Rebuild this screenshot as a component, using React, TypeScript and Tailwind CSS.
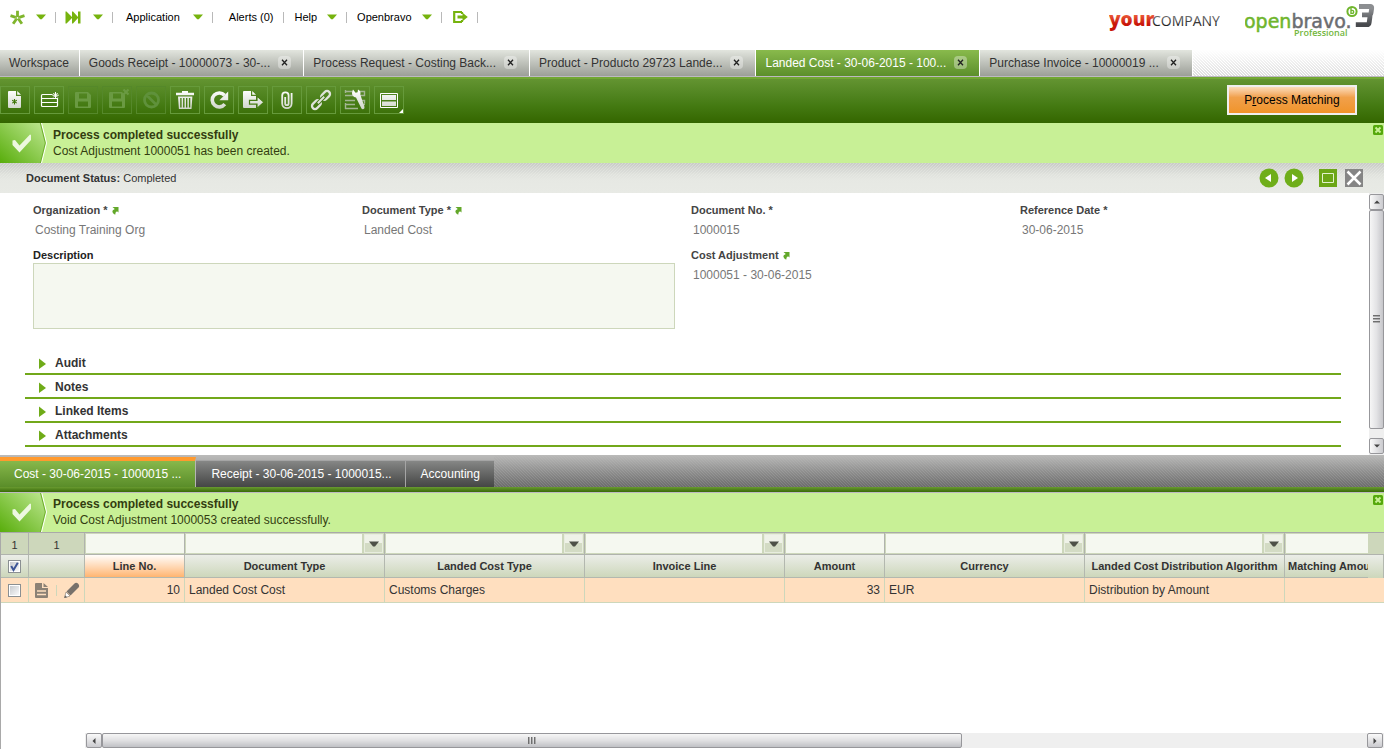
import { useState } from 'react'
import type { ReactNode } from 'react'

const HATCH =
  'bg-[linear-gradient(45deg,rgba(0,0,0,0.13)_17%,transparent_17%,transparent_50%,rgba(0,0,0,0.13)_50%,rgba(0,0,0,0.13)_67%,transparent_67%)] bg-size-[3px_3px]'

function Caret() {
  return (
    <svg width="10" height="6" viewBox="0 0 10 6" className="shrink-0">
      <path d="M0 0.5h10L5.8 5.2H4.2z" fill="#76b30e" />
    </svg>
  )
}

function NavItem({ className, label, children }: { className: string; label?: string; children: ReactNode }) {
  return (
    <div className="flex items-center">
      <button type="button" aria-label={label} className={`flex items-center ${className}`}>
        {children}
      </button>
      <span className="h-[11px] w-px bg-[#b9b9b9]" />
    </div>
  )
}

function TopBar() {
  return (
    <header className="flex h-[50px] items-start justify-between">
      <nav className="flex h-[34px] items-center text-[11px] text-black">
        <NavItem className="gap-[11px] pr-[9px] pl-[10px]" label="Quick create">
          <svg width="15" height="15" viewBox="0 0 15 15">
            <g stroke="#7fb52c" strokeWidth="2.8">
              <path d="M7.5 6V0.8M9.3 7.3l5.2-1.7M8.7 9.2l3.2 4.6M6.3 9.2l-3.2 4.6M5.7 7.3L.5 5.6" />
            </g>
            <circle cx="7.5" cy="7.9" r="2.2" fill="#7fb52c" />
            <circle cx="7.5" cy="7.9" r="0.9" fill="#fff" />
          </svg>
          <Caret />
        </NavItem>
        <NavItem className="gap-3 px-[9px]" label="Quick launch">
          <svg width="16" height="13" viewBox="0 0 16 13">
            <path d="M0.5 0.5h1L7 6V0.5h1L13 6V0.5h2.5v12H13V7l-5 5.5H7V7l-5.5 5.5h-1z" fill="#76b30e" />
          </svg>
          <Caret />
        </NavItem>
        <NavItem className="gap-[13px] pr-[9px] pl-[13px]">
          Application
          <Caret />
        </NavItem>
        <NavItem className="pr-[10px] pl-4">Alerts (0)</NavItem>
        <NavItem className="gap-[10px] pr-[9px] pl-[10px]">
          Help
          <Caret />
        </NavItem>
        <NavItem className="gap-[10px] pr-[9px] pl-[10px]">
          Openbravo
          <Caret />
        </NavItem>
        <NavItem className="pr-[9px] pl-[11px]" label="Log out">
          <svg width="15" height="12" viewBox="0 0 15 12">
            <path d="M9 1H1.2v10H9M9 1v2M9 11V9" fill="none" stroke="#76b30e" strokeWidth="2.2" />
            <path d="M4.5 4.6h5V1.8L14.8 6l-5.3 4.2V7.4h-5z" fill="#76b30e" />
          </svg>
        </NavItem>
      </nav>
      <div className="flex items-start gap-[25px] pr-[9px]">
        <svg width="111" height="34" viewBox="0 0 111 34" role="img" aria-label="yourCOMPANY">
          <defs>
            <linearGradient id="yourRed" x1="0" y1="0" x2="0" y2="1">
              <stop offset="0.3" stopColor="#f0623f" />
              <stop offset="0.7" stopColor="#c8150a" />
            </linearGradient>
            <linearGradient id="companyGrey" x1="0" y1="0" x2="0" y2="1">
              <stop offset="0.2" stopColor="#777" />
              <stop offset="0.8" stopColor="#1c1c1c" />
            </linearGradient>
          </defs>
          <text x="0" y="26" fontFamily="Open Sans" fontSize="19" fontWeight="800" fill="url(#yourRed)">your</text>
          <text x="43" y="26" fontFamily="Open Sans" fontSize="14" fontWeight="400" fill="url(#companyGrey)">COMPANY</text>
        </svg>
        <svg width="130" height="40" viewBox="0 0 130 40" role="img" aria-label="Openbravo 3 Professional">
          <defs>
            <linearGradient id="three" gradientUnits="userSpaceOnUse" x1="0" y1="4" x2="0" y2="27">
              <stop offset="0.2" stopColor="#8c8e91" />
              <stop offset="0.9" stopColor="#47494d" />
            </linearGradient>
          </defs>
          <text x="-1" y="28" fontFamily="DejaVu Sans" fontSize="19" strokeWidth="0.5">
            <tspan fill="#6fb52c" stroke="#6fb52c">open</tspan>
            <tspan fill="#6b6d70" stroke="#6b6d70">bravo.</tspan>
          </text>
          <text x="49" y="36" fontFamily="Open Sans" fontSize="9" fontWeight="600" fill="#72b63c">Professional</text>
          <circle cx="107" cy="11.5" r="4.6" fill="#fff" stroke="#6fb52c" strokeWidth="2" />
          <path d="M106 8v5.4h1.2a1.5 1.5 0 0 0 0-3H106" fill="none" stroke="#6fb52c" strokeWidth="1.4" />
          <path d="M114 6.5h11.2q1.8 0 1.5 1.7l-.7 4.8q-.3 1.8-2 1.8h-7M123.5 14.8q1.8 0 1.5 1.7l-.8 5.8q-.3 2.4-2.4 2.4h-11" fill="none" stroke="url(#three)" strokeWidth="4.8" />
        </svg>
      </div>
    </header>
  )
}

const tabs = [
  { id: 'workspace', title: 'Workspace', closable: false },
  { id: 'receipt', title: 'Goods Receipt - 10000073 - 30-...', closable: true },
  { id: 'request', title: 'Process Request - Costing Back...', closable: true },
  { id: 'product', title: 'Product - Producto 29723 Lande...', closable: true },
  { id: 'cost', title: 'Landed Cost - 30-06-2015 - 100...', closable: true },
  { id: 'invoice', title: 'Purchase Invoice - 10000019 ...', closable: true },
]

function WindowTabs() {
  const [active, setActive] = useState('cost')
  return (
    <div className="flex h-[27px] border-b border-[#bdb9c1]">
      {tabs.map((tab) => (
        <div
          key={tab.id}
          className={`flex items-center border-r border-white pb-px pl-[9px] text-xs whitespace-nowrap ${
            tab.closable ? 'pr-3' : 'pr-[10px]'
          } ${
            tab.id === active
              ? 'bg-linear-to-b from-[#89ba4c] to-[#5c8f2b] text-white'
              : 'bg-linear-to-b from-[#e2e5de] to-[#9c9f98] text-[#333]'
          }`}
        >
          <button type="button" onClick={() => setActive(tab.id)}>
            {tab.title}
          </button>
          {tab.closable && (
            <button
              type="button"
              aria-label="Close tab"
              className="ml-2 flex h-[13px] w-[13px] items-center justify-center rounded-sm bg-white/35 text-[#222]"
            >
              <svg width="7" height="7" viewBox="0 0 7 7">
                <path d="M1 0.8l5 5.4M6 0.8L1 6.2" stroke="currentColor" strokeWidth="1.3" />
              </svg>
            </button>
          )}
        </div>
      ))}
      <div className={`flex-1 ${HATCH} mask-t-from-0%`} />
    </div>
  )
}

const DISK = 'M7 7q0-1 1-1h12l3 3v12q0 1-1 1H8q-1 0-1-1zM11 7.5v5h8v-5zM10 15.5v5h10v-5z'

const tools: { label: string; icon: ReactNode; disabled?: boolean; menu?: boolean }[] = [
  {
    label: 'New in form',
    icon: (
      <>
        <path d="M8 6q0-1 1-1h7v5h5v11q0 1-1 1H9q-1 0-1-1zM17.2 5L21 8.8h-3.8z" fill="url(#tool)" />
        <path d="M14.5 13v5.4M12.2 14.3l4.6 2.8M16.8 14.3l-4.6 2.8" stroke="#3c7505" strokeWidth="1.1" />
      </>
    ),
  },
  {
    label: 'New in grid',
    icon: (
      <>
        <path d="M18.5 8.5h-10q-1 0-1 1v10q0 1 1 1h14q1 0 1-1V12M7.5 12.5h16M7.5 16.5h16" fill="none" stroke="#fff" strokeWidth="1.2" />
        <path d="M21.5 6v6.4M18.4 9.2h6.4M19.3 7l4.4 4.4M23.7 7l-4.4 4.4" stroke="#fff" />
      </>
    ),
  },
  { label: 'Save', disabled: true, icon: <path d={DISK} fill="#6a9a42" fillRule="evenodd" /> },
  {
    label: 'Save and close',
    disabled: true,
    icon: (
      <>
        <path d={DISK} fill="#6a9a42" fillRule="evenodd" />
        <path d="M21.5 3.5l5 5M26.5 3.5l-5 5" stroke="#6a9a42" strokeWidth="2.2" />
      </>
    ),
  },
  {
    label: 'Undo',
    disabled: true,
    icon: <path d="M10.5 9l10 10M8.5 14a7 7 0 1 0 14 0a7 7 0 1 0-14 0z" fill="none" stroke="#5f913b" strokeWidth="2.8" />,
  },
  {
    label: 'Delete',
    icon: (
      <path
        d="M12 5h6v1.8h6v2.4H6V6.8h6zM8 10.5h14.4L21.5 23H8.9z M10.2 12v9.5h1.4V12zM13.1 12v9.5h1.4V12zM16 12v9.5h1.4V12zM18.9 12v9.5h1.4V12z"
        fill="url(#tool)"
        fillRule="evenodd"
      />
    ),
  },
  {
    label: 'Refresh',
    icon: (
      <>
        <path d="M20.8 18.2a7 7 0 1 1-.3-8.9" fill="none" stroke="url(#tool)" strokeWidth="3.6" />
        <path d="M24.2 5.5v8.8h-8.8z" fill="url(#tool)" />
      </>
    ),
  },
  {
    label: 'Export',
    icon: (
      <>
        <path d="M5 6q0-1 1-1h7v5h5v12H6q-1 0-1-1zM14.2 5L18 8.8h-3.8z" fill="url(#tool)" />
        <path d="M11.5 14.3H19V10l7 6.2-7 6.2v-4.3h-7.5z" fill="url(#tool)" stroke="#477c15" strokeWidth="1.2" />
      </>
    ),
  },
  {
    label: 'Attachments',
    icon: (
      <path
        d="M13.2 11v6.5a1.7 1.7 0 0 0 3.4 0V9.5a3.2 3.2 0 0 0-6.4 0v8a4.7 4.7 0 0 0 9.4 0V7"
        fill="none"
        stroke="url(#tool)"
        strokeWidth="1.8"
      />
    ),
  },
  {
    label: 'Direct link',
    icon: (
      <g fill="none" stroke="#dfe3da" strokeWidth="2.3" transform="rotate(-45 15 14)">
        <rect x="3.5" y="11" width="10" height="6" rx="3" />
        <rect x="16.5" y="11" width="10" height="6" rx="3" />
        <path d="M11 14h8" stroke="#3f7410" strokeWidth="4" />
        <path d="M10.5 14h9" strokeWidth="2" />
      </g>
    ),
  },
  {
    label: 'Customize form',
    icon: (
      <>
        <path d="M5 5.5h7M5 9.5h8M5.5 4v3M5 14.5h10M5 18.5h10M5 22.5h13M5.5 17v6M19.5 5.5h5v4h-5M19.5 14.5h5v3M22 18.5h3" fill="none" stroke="#a3b593" strokeWidth="1.4" />
        <path d="M13 3.5l2.6 3.2 2-.4.4-2.8q3.3 1.5 2.3 5l4.2 12.5q.3 2-1.5 2.3-1.3 0-1.8-1.3L16 11.5q-4-.6-4-4.5 0-2 1-3.5z" fill="url(#tool)" />
      </>
    ),
  },
  {
    label: 'Window layout',
    menu: true,
    icon: (
      <>
        <path d="M6.5 7.5h17v14h-17z" fill="none" stroke="#fff" />
        <path d="M8 9h14v5H8zM8 15.5h14V20H8z" fill="url(#tool)" />
      </>
    ),
  },
]

function Toolbar() {
  return (
    <div className="flex h-[46px] items-center justify-between border-t-2 border-[#72a733] bg-linear-to-b from-[#639431] via-[#447a12] via-60% to-[#346600] pr-[27px] pb-[2px]">
      <svg width="0" height="0" className="absolute" aria-hidden="true">
        <defs>
          <linearGradient id="tool" gradientUnits="userSpaceOnUse" x1="0" y1="4" x2="0" y2="24">
            <stop offset="0" stopColor="#ffffff" />
            <stop offset="1" stopColor="#cdd3c7" />
          </linearGradient>
        </defs>
      </svg>
      <div className="flex gap-1">
        {tools.map((tool) => (
          <button
            key={tool.label}
            type="button"
            aria-label={tool.label}
            disabled={tool.disabled}
            className={`relative h-7 w-[30px] border ${tool.disabled ? 'border-[#55882a]' : 'border-[#669a3b]'}`}
          >
            <svg width="28" height="26" viewBox="1 1 28 26">
              {tool.icon}
            </svg>
            {tool.menu && (
              <svg width="4" height="4" viewBox="0 0 4 4" className="absolute right-0 bottom-0">
                <path d="M4 0v4H0z" fill="#fff" />
              </svg>
            )}
          </button>
        ))}
      </div>
      <button
        type="button"
        className="h-[30px] w-[130px] border-2 border-[#efefef] bg-linear-to-b from-[#fbdcb9] via-[#f1a04a] via-40% to-[#f09429] text-xs text-black"
      >
        P<u>r</u>ocess Matching
      </button>
    </div>
  )
}

function Message({ id, title, text, className = '' }: { id: string; title: string; text: string; className?: string }) {
  return (
    <div role="status" className={`relative flex h-10 items-center overflow-hidden bg-[#c8f096] text-xs text-[#333d10] ${className}`}>
      <svg width="47" height="40" viewBox="0 0 47 40" className="shrink-0">
        <defs>
          <linearGradient id={id} x1="0" y1="1" x2="1" y2="0">
            <stop offset="0" stopColor="#58ad0b" />
            <stop offset="1" stopColor="#bfe892" />
          </linearGradient>
        </defs>
        <path d="M0 0h40l5 20-5 20H0z" fill={`url(#${id})`} />
        <path d="M41.5 0l5 20-5 20" fill="none" stroke="#fff" />
        <path d="M40.3 0l5 20-5 20" fill="none" stroke="#6aac27" />
        <path d="M12.5 17.5l2.5-.5 4.5 5.5 10.500-11 1 .5v5L19.5 29.500l-7-7.500z" fill="#edf8e0" />
      </svg>
      <div className="pl-[6px] leading-4">
        <p className="font-bold">{title}</p>
        <p>{text}</p>
      </div>
      <button type="button" aria-label="Dismiss message" className="absolute top-[2px] right-px">
        <svg width="10" height="10" viewBox="0 0 10 10">
          <rect width="10" height="10" rx="1.5" fill="#55a80c" />
          <path d="M2.5 2.5l5 5M7.5 2.5l-5 5" stroke="#c8f096" strokeWidth="2" />
        </svg>
      </button>
    </div>
  )
}

function StatusBar() {
  return (
    <div className="relative flex h-[30px] items-center justify-between bg-linear-to-b from-[#d6d8d4] via-[#e6e8e3] via-40% to-[#e8eae5] pr-[20px] pl-[26px] text-[11px] text-[#333]">
      <div className="pointer-events-none absolute inset-x-0 top-0 h-[18px] bg-[linear-gradient(135deg,rgba(0,0,0,0.06)_17%,transparent_17%,transparent_50%,rgba(0,0,0,0.06)_50%,rgba(0,0,0,0.06)_67%,transparent_67%)] mask-b-from-0% bg-size-[3px_3px]" />
      <p>
        <b>Document Status:</b> Completed
      </p>
      <div className="relative flex items-center">
        <button type="button" aria-label="Previous record">
          <svg width="20" height="20" viewBox="0 0 20 20">
            <circle cx="10" cy="10" r="9.5" fill="#6fae1a" />
            <path d="M12 6v8l-6-4z" fill="#fff" />
          </svg>
        </button>
        <button type="button" aria-label="Next record" className="ml-[5px]">
          <svg width="20" height="20" viewBox="0 0 20 20">
            <circle cx="10" cy="10" r="9.5" fill="#6fae1a" />
            <path d="M8 6v8l6-4z" fill="#fff" />
          </svg>
        </button>
        <button type="button" aria-label="Maximize" className="ml-[15px]">
          <svg width="18" height="18" viewBox="0 0 18 18">
            <path d="M0 0h18v18H0z" fill="#6ca716" />
            <path d="M3.5 4.5h11v9h-11z" fill="none" stroke="#e3f2cd" />
          </svg>
        </button>
        <button type="button" aria-label="Close form" className="ml-2">
          <svg width="19" height="18" viewBox="0 0 19 18">
            <path d="M0 0h18v18H0z" fill="#858585" />
            <path d="M2.5 2.5l13 13M15.5 2.5l-13 13" stroke="#fff" strokeWidth="2.5" />
          </svg>
        </button>
      </div>
    </div>
  )
}

function Field({ id, label, value, link }: { id: string; label: string; value: string; link?: boolean }) {
  return (
    <div className="px-2">
      <div className="flex h-4 items-center gap-[3px]">
        <label htmlFor={id} className="text-[11px] font-bold text-[#444]">
          {label}
        </label>
        {link && (
          <a href="#" aria-label={`Open ${label}`}>
            <svg width="8" height="9" viewBox="0 0 8 9">
              <path d="M1.5 1h6v5.5L6 5.200Q4.200 5.800 4.200 8.700 .3 6.500 1.800 4.200L3.800 2.900z" fill="#63a82a" />
            </svg>
          </a>
        )}
      </div>
      <input id={id} readOnly defaultValue={value} className="block h-6 w-full pl-[2px] text-xs text-[#777] outline-none" />
    </div>
  )
}

function Arrow({ dir }: { dir: 'up' | 'down' | 'left' | 'right' }) {
  const d = { up: 'M0 6l4-4 4 4z', down: 'M0 2l4 4 4-4z', left: 'M6 0L2 4l4 4z', right: 'M2 0l4 4-4 4z' }
  return (
    <svg width="6" height="6" viewBox="0 0 8 8">
      <path d={d[dir]} fill="#444" />
    </svg>
  )
}

function VerticalScrollbar() {
  const cap = 'flex h-4 shrink-0 items-center justify-center rounded-xs border border-[#97979b] bg-linear-to-r from-[#fafafa] to-[#cbcbcf]'
  return (
    <div className="flex w-[15px] shrink-0 flex-col bg-[#efefef] py-px">
      <button type="button" aria-label="Scroll up" className={cap}>
        <Arrow dir="up" />
      </button>
      <div className="flex-1">
        <div className="flex h-[96%] items-center justify-center rounded-xs border border-[#97979b] bg-linear-to-r from-[#f6f6f6] via-[#e3e3e5] to-[#c6c6ca]">
          <span className="h-2 w-[7px] bg-[repeating-linear-gradient(#666_0px,#777_1px,transparent_2px,transparent_3px)]" />
        </div>
      </div>
      <button type="button" aria-label="Scroll down" className={cap}>
        <Arrow dir="down" />
      </button>
    </div>
  )
}

function HorizontalScrollbar() {
  const cap = 'flex w-4 shrink-0 items-center justify-center rounded-xs border border-[#97979b] bg-linear-to-b from-[#fafafa] to-[#cbcbcf]'
  return (
    <div className="mb-px ml-[84px] flex h-[15px] bg-[#efefef] px-px">
      <button type="button" aria-label="Scroll left" className={cap}>
        <Arrow dir="left" />
      </button>
      <div className="flex-1">
        <div className="flex h-full w-[68%] items-center justify-center rounded-xs border border-[#97979b] bg-linear-to-b from-[#f6f6f6] via-[#e0e0e2] to-[#c0c1c5]">
          <span className="h-[7px] w-2 bg-[repeating-linear-gradient(90deg,#666_0px,#777_1px,transparent_2px,transparent_3px)]" />
        </div>
      </div>
      <button type="button" aria-label="Scroll right" className={cap}>
        <Arrow dir="right" />
      </button>
    </div>
  )
}

const sections = ['Audit', 'Notes', 'Linked Items', 'Attachments']

function HeaderForm() {
  return (
    <div className="flex">
      <form className="min-w-0 flex-1 pt-[9px] pr-7 pb-2 pl-[25px]">
        <div className="grid grid-cols-4 gap-y-[5px]">
          <Field id="organization" label="Organization *" value="Costing Training Org" link />
          <Field id="doctype" label="Document Type *" value="Landed Cost" link />
          <Field id="docno" label="Document No. *" value="1000015" />
          <Field id="refdate" label="Reference Date *" value="30-06-2015" />
          <div className="col-span-2 px-2">
            <label htmlFor="description" className="block h-4 text-[11px] leading-4 font-bold text-[#222]">
              Description
            </label>
            <textarea
              id="description"
              className="block h-[66px] w-full resize-none border border-[#cdd7bb] bg-[#f5f8f0] p-1 text-xs outline-none"
            />
          </div>
          <Field id="adjustment" label="Cost Adjustment" value="1000051 - 30-06-2015" link />
        </div>
        <div className="mt-[22px]">
          {sections.map((name) => (
            <button
              key={name}
              type="button"
              className="flex h-6 w-full items-center gap-[9px] border-b-2 border-[#72a81a] pt-[2px] pl-[14px] text-xs font-bold text-[#333]"
            >
              <svg width="7" height="12" viewBox="0 0 7 12">
                <path d="M0 1.5L7 7l-7 5z" fill="#6fab18" />
              </svg>
              {name}
            </button>
          ))}
        </div>
      </form>
      <VerticalScrollbar />
    </div>
  )
}

function ChildTabs() {
  return (
    <div>
      <div className="flex h-8 items-end bg-linear-to-b from-[#bbbbba] to-[#7c7c7c] text-xs text-white">
        <button
          type="button"
          className="h-[30px] border-t-4 border-r border-[#ff9a2e] border-r-[#b5b5b5] bg-linear-to-b from-[#87b84b] to-[#5a8d29] pr-[14px] pb-px pl-[14px]"
        >
          Cost - 30-06-2015 - 1000015 ...
        </button>
        <button
          type="button"
          className="h-[27px] border-t border-r border-[#a5a5a5] bg-linear-to-b from-[#868786] to-[#454645] pr-[13px] pl-[15px]"
        >
          Receipt - 30-06-2015 - 1000015...
        </button>
        <button type="button" className="h-[27px] border-t border-[#a5a5a5] bg-linear-to-b from-[#868786] to-[#454645] pr-[14px] pl-[15px]">
          Accounting
        </button>
        <div className={`flex-1 self-stretch ${HATCH} mask-t-from-0%`} />
      </div>
      <div className="h-[5px] bg-linear-to-b from-[#6a9b30] to-[#386a04]" />
    </div>
  )
}

function Tick({ label, checked }: { label: string; checked?: boolean }) {
  return (
    <span className="relative mx-auto block h-[13px] w-[13px]">
      <input
        type="checkbox"
        aria-label={label}
        defaultChecked={checked}
        className="peer absolute inset-0 appearance-none border border-[#8a8f92] bg-linear-to-br from-[#c3c6ca] to-white shadow-[inset_0_0_0_1px_#fff]"
      />
      <svg width="13" height="13" viewBox="0 0 13 13" className="pointer-events-none absolute inset-0 hidden peer-checked:block">
        <path d="M3.2 6l2.3 4L9.8 2.8" fill="none" stroke="#3d5596" strokeWidth="2" />
      </svg>
    </span>
  )
}

const columns = [
  { title: 'Line No.', combo: false },
  { title: 'Document Type', combo: true },
  { title: 'Landed Cost Type', combo: true },
  { title: 'Invoice Line', combo: true },
  { title: 'Amount', combo: false },
  { title: 'Currency', combo: true },
  { title: 'Landed Cost Distribution Algorithm', combo: true },
]

const cells = ['10', 'Landed Cost Cost', 'Customs Charges', '', '33', 'EUR', 'Distribution by Amount']

function LinesGrid() {
  return (
    <div className="flex flex-1 flex-col border-t border-l border-[#a9a9a9]">
      <table className="w-full table-fixed border-separate border-spacing-0 text-xs text-[#333]">
        <colgroup>
          <col className="w-7" />
          <col className="w-14" />
          <col className="w-[100px]" />
          <col className="w-[200px]" />
          <col className="w-[200px]" />
          <col className="w-[200px]" />
          <col className="w-[100px]" />
          <col className="w-[200px]" />
          <col className="w-[200px]" />
          <col />
          <col className="w-4" />
        </colgroup>
        <thead>
          <tr className="h-[22px] bg-[#cdd7bb]">
            <td className="border-r border-b border-[#b0b3ad] pt-[3px] text-center text-[11px]">1</td>
            <td className="border-r border-b border-[#b0b3ad] pt-[3px] text-center text-[11px]">1</td>
            {columns.map((col) => (
              <td key={col.title} className="border-r border-b border-[#b0b3ad] p-0">
                <div className="flex h-[21px] gap-[2px] p-px pr-0">
                  <input type="text" aria-label={`Filter ${col.title}`} className="h-[19px] min-w-0 flex-1 bg-[#f5f8f0] px-1 outline-none" />
                  {col.combo && (
                    <button
                      type="button"
                      aria-label={`Show ${col.title} values`}
                      className="mr-px flex h-[19px] w-[19px] items-center justify-center border border-[#e8eddf] bg-linear-to-b from-[#eff2e8] from-50% to-[#d3dbc4] to-50%"
                    >
                      <svg width="10" height="6" viewBox="0 0 10 6">
                        <path d="M0 0.5h10L6 5.5H4z" fill="#4d5147" />
                      </svg>
                    </button>
                  )}
                </div>
              </td>
            ))}
            <td className="border-b border-[#b0b3ad] p-0">
              <div className="h-[21px] py-px pl-px">
                <input type="text" aria-label="Filter Matching Amount" className="block h-[19px] w-full bg-[#f5f8f0] px-1 outline-none" />
              </div>
            </td>
            <td className="border-b border-[#b0b3ad]" />
          </tr>
          <tr className="h-[23px] text-[11px] font-bold">
            <th scope="col" className="border-r border-b border-[#b3b8af] bg-linear-to-b from-[#ebede8] to-[#cdd7bb] p-0">
              <Tick label="Select all lines" checked />
            </th>
            <th className="border-r border-b border-[#b3b8af] bg-linear-to-b from-[#ebede8] to-[#cdd7bb] p-0" />
            {columns.map((col, i) => (
              <th
                key={col.title}
                scope="col"
                className={`border-r border-b border-[#b3b8af] bg-linear-to-b p-0 whitespace-nowrap ${
                  i === 0 ? 'from-[#fffdfb] to-[#ffb570]' : 'from-[#ebede8] to-[#cdd7bb]'
                }`}
              >
                {col.title}
              </th>
            ))}
            <th
              scope="col"
              className="overflow-hidden border-b border-[#b3b8af] bg-linear-to-b from-[#ebede8] to-[#cdd7bb] p-0 pl-[3px] text-left whitespace-nowrap"
            >
              Matching Amount
            </th>
            <th className="border-r border-[#b3b8af] bg-linear-to-b from-[#ebede8] to-[#cdd7bb] p-0" />
          </tr>
        </thead>
        <tbody>
          <tr className="h-[25px] bg-[#ffdfbf]">
            <td className="border-r border-b border-[#cdd7bb] p-0">
              <Tick label="Select line 10" />
            </td>
            <td className="border-r border-b border-[#cdd7bb] p-0">
              <div className="flex items-center justify-between pr-1 pl-[6px]">
                <button type="button" aria-label="Edit in form">
                  <svg width="13" height="15" viewBox="0 0 13 15">
                    <path d="M0 1q0-1 1-1h6v5h6v9q0 1-1 1H1q-1 0-1-1zM8.5 0L13 4H8.5z" fill="#8b8175" />
                    <path d="M2 8h9M2 11.5h9" stroke="#ffdfbf" strokeWidth="1.3" />
                  </svg>
                </button>
                <span className="h-[11px] w-px bg-[#cdd7bb]" />
                <button type="button" aria-label="Edit in grid">
                  <svg width="16" height="16" viewBox="0 0 16 16">
                    <path d="M10.5 1.5q1.5-1.5 3.5 0l1 1.5q.5 1.5-.5 2.5l-8 8L2.5 9.5z" fill="#77716b" />
                    <path d="M2 10l4 4-5.5 1.8z" fill="#fff" stroke="#8b8175" strokeWidth=".7" />
                    <path d="M.3 16l.8-2.8 2 2z" fill="#6a645e" />
                  </svg>
                </button>
              </div>
            </td>
            {cells.map((cell, i) => (
              <td
                key={columns[i].title}
                className={`border-r border-b border-[#cdd7bb] px-1 py-0 whitespace-nowrap ${i === 0 || i === 4 ? 'text-right' : ''}`}
              >
                {cell}
              </td>
            ))}
            <td colSpan={2} className="border-b border-[#cdd7bb]" />
          </tr>
        </tbody>
      </table>
      <div className="flex-1" />
      <HorizontalScrollbar />
    </div>
  )
}

export default function App() {
  return (
    <div className="flex min-h-screen flex-col overflow-hidden bg-white font-['Liberation_Sans',Arial,sans-serif]">
      <TopBar />
      <WindowTabs />
      <Toolbar />
      <Message id="headerMsg" title="Process completed successfully" text="Cost Adjustment 1000051 has been created." />
      <StatusBar />
      <HeaderForm />
      <ChildTabs />
      <Message
        id="linesMsg"
        title="Process completed successfully"
        text="Void Cost Adjustment 1000053 created successfully."
        className="border-t border-[#bdb9c1] pb-[2px]"
      />
      <LinesGrid />
    </div>
  )
}
